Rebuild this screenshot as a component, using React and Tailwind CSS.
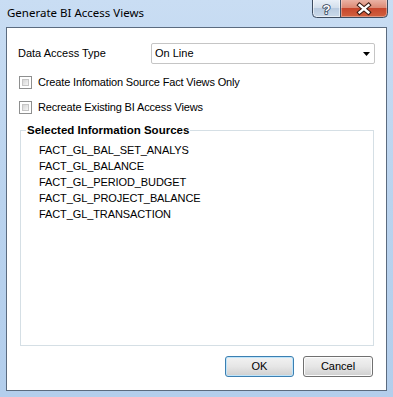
import React from "react";

function CaptionButtons() {
  return (
    <svg width="76" height="18" viewBox="0 0 76 18" className="block">
      <defs>
        <linearGradient id="hg" x1="0" y1="0" x2="0" y2="1">
          <stop offset="0" stopColor="#e9f0f8" />
          <stop offset="0.45" stopColor="#d3dfec" />
          <stop offset="0.5" stopColor="#b9cbe0" />
          <stop offset="1" stopColor="#cbdaea" />
        </linearGradient>
        <linearGradient id="cg" x1="0" y1="0" x2="0" y2="1">
          <stop offset="0" stopColor="#eab2a4" />
          <stop offset="0.45" stopColor="#dc8a75" />
          <stop offset="0.5" stopColor="#c7472d" />
          <stop offset="1" stopColor="#d2613f" />
        </linearGradient>
      </defs>
      <path d="M1 0 V13.5 Q1 17 4.5 17 H28 V0 Z" fill="url(#hg)" />
      <path d="M29 0 H75 V13.5 Q75 17 71.5 17 H29 Z" fill="url(#cg)" />
      <path d="M1.5 0 V13.5 Q1.5 16.5 4.5 16.5 H27.5 V0" fill="none" stroke="#ffffff" strokeOpacity="0.55" strokeWidth="1" />
      <path d="M29.5 0 V16.5 H71.5 Q74.5 16.5 74.5 13.5 V0" fill="none" stroke="#ffffff" strokeOpacity="0.35" strokeWidth="1" />
      <path d="M0.5 0 V13.5 Q0.5 17.5 4.5 17.5 H71.5 Q75.5 17.5 75.5 13.5 V0 M28.5 0 V17.5" fill="none" stroke="#3d4c60" strokeWidth="1" />
      <text x="14.5" y="13.5" textAnchor="middle" fontSize="13" fontWeight="bold" fontFamily="Liberation Sans, Arial, sans-serif" fill="#ffffff" stroke="#2b3b52" strokeWidth="1.6" paintOrder="stroke" strokeLinejoin="round">?</text>
      <path d="M47.5 5 L56.5 12.5 M56.5 5 L47.5 12.5" stroke="#3a1a12" strokeWidth="4.4" strokeLinecap="square" />
      <path d="M47.5 5 L56.5 12.5 M56.5 5 L47.5 12.5" stroke="#ffffff" strokeWidth="2.3" strokeLinecap="square" />
    </svg>
  );
}

function Checkbox() {
  return (
    <div className="w-[13px] h-[13px] border border-[#8e8f8f] bg-[#ffffff] p-[2px] shrink-0">
      <div className="w-full h-full border border-[#c6c6c6] bg-linear-to-br from-[#d6d6d6] to-[#f6f6f6]" />
    </div>
  );
}

export default function App() {
  const items = [
    "FACT_GL_BAL_SET_ANALYS",
    "FACT_GL_BALANCE",
    "FACT_GL_PERIOD_BUDGET",
    "FACT_GL_PROJECT_BALANCE",
    "FACT_GL_TRANSACTION",
  ];
  return (
    <div className="w-[393px] h-[397px] flex flex-col px-[6px] pb-[6px] bg-linear-to-b from-[#c9ddf3] via-[#bad3ee] to-[#b3ceec] [font-family:'Liberation_Sans',Arial,sans-serif] text-[11px] text-[#000000] overflow-hidden">
      {/* title bar */}
      <div className="h-[27px] flex items-start justify-between">
        <div className="pt-[5px] pl-[1px] text-[11.5px] [font-family:'Noto_Sans','Open_Sans',sans-serif] leading-[16px]">
          Generate BI Access Views
        </div>
        <div className="mr-[-1px]">
          <CaptionButtons />
        </div>
      </div>
      {/* client */}
      <div className="flex-1 flex flex-col border border-[#5b6b7f] bg-[#ffffff] pl-[11px] pr-[11px]">
        <div className="mt-[15px] flex items-center h-[21px]">
          <div className="w-[133px]">Data Access Type</div>
          <div className="flex-1 h-[21px] border border-[#c5c5c5] rounded-[2px] flex items-center justify-between pl-[3px] pr-[4px]">
            <span>On Line</span>
            <svg width="7" height="4" viewBox="0 0 7 4"><path d="M0 0H7L3.5 4Z" fill="#000" /></svg>
          </div>
        </div>
        <div className="mt-[12px] flex items-center gap-[6px] pl-[1px] h-[13px]">
          <Checkbox />
          <span className="tracking-[-0.15px]">Create Infomation Source Fact Views Only</span>
        </div>
        <div className="mt-[12px] flex items-center gap-[6px] pl-[1px] h-[13px]">
          <Checkbox />
          <span className="tracking-[-0.15px]">Recreate Existing BI Access Views</span>
        </div>
        <fieldset className="mt-[8px] ml-[2px] mr-[1px] h-[224px] border border-[#d5dfe5] px-[5px]">
          <legend className="px-[1px] font-bold text-[11.5px] leading-[16px]">Selected Information Sources</legend>
          <div className="flex flex-col pl-[13px] pt-[4px] tracking-[-0.1px]">
            {items.map((t) => (
              <div key={t} className="h-[16px] leading-[16px]">{t}</div>
            ))}
          </div>
        </fieldset>
        <div className="mt-[10px] flex justify-end gap-[9px] pr-[2px]">
          <button className="w-[69px] h-[21px] rounded-[3px] border border-[#3c7fb1] bg-linear-to-b from-[#f2f2f2] via-[#e6e6e6] to-[#cfcfcf] shadow-[inset_0_0_0_1px_#bfe5fb] text-[11px] [font-family:'Liberation_Sans',Arial,sans-serif]">
            OK
          </button>
          <button className="w-[70px] h-[21px] rounded-[3px] border border-[#707070] bg-linear-to-b from-[#f2f2f2] via-[#e6e6e6] to-[#cfcfcf] shadow-[inset_0_0_0_1px_#fcfcfc] text-[11px] [font-family:'Liberation_Sans',Arial,sans-serif]">
            Cancel
          </button>
        </div>
      </div>
    </div>
  );
}
